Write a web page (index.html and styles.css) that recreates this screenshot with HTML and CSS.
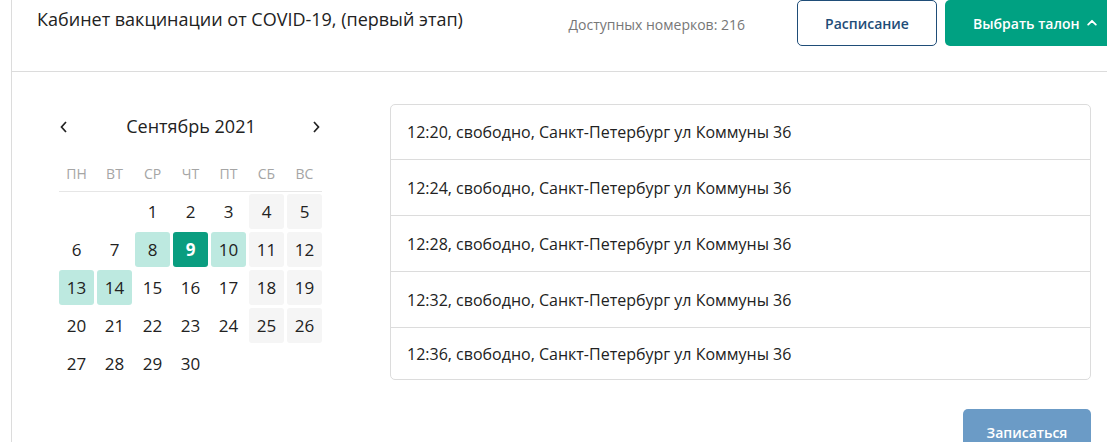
FILE: index.html
```html
<!DOCTYPE html>
<html lang="ru">
<head>
<meta charset="utf-8">
<title>Кабинет вакцинации</title>
<link rel="stylesheet" href="styles.css">
</head>
<body>
<div class="panel">
  <header class="head">
    <div class="title">Кабинет вакцинации от COVID-19, (первый этап)</div>
    <div class="actions">
      <span class="count">Доступных номерков: 216</span>
      <button class="btn btn-outline">Расписание</button>
      <button class="btn btn-green">Выбрать талон
        <svg class="caret" width="10" height="7" viewBox="0 0 10 7"><path d="M1.2 5.6 L5 1.8 L8.8 5.6" fill="none" stroke="#fff" stroke-width="1.8" stroke-linecap="round" stroke-linejoin="round"/></svg>
      </button>
    </div>
  </header>
  <main class="content">
    <section class="cal">
      <div class="cal-nav">
        <svg class="arrow" width="10" height="14" viewBox="0 0 10 14"><path d="M7 2 L2.5 7 L7 12" fill="none" stroke="#222" stroke-width="1.7"/></svg>
        <div class="month">Сентябрь 2021</div>
        <svg class="arrow" width="10" height="14" viewBox="0 0 10 14"><path d="M3 2 L7.5 7 L3 12" fill="none" stroke="#222" stroke-width="1.7"/></svg>
      </div>
      <div class="weekdays">
        <span>ПН</span><span>ВТ</span><span>СР</span><span>ЧТ</span><span>ПТ</span><span>СБ</span><span>ВС</span>
      </div>
      <div class="days">
        <span class="d"></span><span class="d"></span><span class="d">1</span><span class="d">2</span><span class="d">3</span><span class="d we">4</span><span class="d we">5</span>
        <span class="d">6</span><span class="d">7</span><span class="d av">8</span><span class="d sel">9</span><span class="d av">10</span><span class="d we">11</span><span class="d we">12</span>
        <span class="d av">13</span><span class="d av">14</span><span class="d">15</span><span class="d">16</span><span class="d">17</span><span class="d we">18</span><span class="d we">19</span>
        <span class="d">20</span><span class="d">21</span><span class="d">22</span><span class="d">23</span><span class="d">24</span><span class="d we">25</span><span class="d we">26</span>
        <span class="d">27</span><span class="d">28</span><span class="d">29</span><span class="d">30</span>
      </div>
    </section>
    <section class="right">
      <ul class="slots">
        <li>12:20, свободно, Санкт-Петербург ул Коммуны 36</li>
        <li>12:24, свободно, Санкт-Петербург ул Коммуны 36</li>
        <li>12:28, свободно, Санкт-Петербург ул Коммуны 36</li>
        <li>12:32, свободно, Санкт-Петербург ул Коммуны 36</li>
        <li>12:36, свободно, Санкт-Петербург ул Коммуны 36</li>
      </ul>
      <div class="submit-row">
        <button class="btn btn-submit">Записаться</button>
      </div>
    </section>
  </main>
</div>
</body>
</html>
```

FILE: styles.css
```css
html, body {
  margin: 0;
  padding: 0;
  overflow: hidden;
  background: #fff;
  font-family: "Open Sans", "Liberation Sans", sans-serif;
  color: #222;
}
.panel {
  margin-left: 11px;
  border-left: 1px solid #dcdcdc;
  min-height: 442px;
  overflow: hidden;
}
.head {
  display: flex;
  align-items: flex-start;
  height: 72px;
  box-sizing: border-box;
  border-bottom: 1px solid #dcdcdc;
  padding-left: 25px;
}
.title {
  flex: 1;
  font-size: 18px;
  line-height: 24px;
  margin-top: 7px;
  color: #222;
  white-space: nowrap;
}
.actions {
  display: flex;
  align-items: center;
  height: 46px;
  margin-right: -20px;
}
.count {
  font-size: 14px;
  color: #777;
  margin-right: 52px;
  margin-top: 2px;
}
.btn {
  font-family: "Open Sans", "Liberation Sans", sans-serif;
  font-size: 14px;
  font-weight: 600;
  border-radius: 5px;
  height: 46px;
  box-sizing: border-box;
  cursor: pointer;
  padding: 0;
  display: flex;
  align-items: center;
  justify-content: center;
}
.btn-outline {
  width: 140px;
  background: #fff;
  border: 1px solid #1f4d78;
  color: #1f4d78;
  margin-right: 8px;
}
.btn-green {
  width: 182px;
  background: #00a182;
  border: none;
  color: #fff;
  justify-content: flex-start;
  padding-left: 28px;
  gap: 7px;
}
.caret { margin-top: -1px; }
.content {
  display: flex;
  align-items: flex-start;
  padding: 32px 16px 0 47px;
}
.cal {
  width: 263px;
  flex: none;
}
.cal-nav {
  display: flex;
  align-items: center;
  justify-content: space-between;
  height: 46px;
  padding: 0 1px 0 0;
}
.arrow { display: block; }
.month {
  font-size: 18px;
  font-weight: 500;
  color: #222;
  padding-left: 2px;
  margin-top: -2px;
}
.weekdays {
  display: grid;
  grid-template-columns: repeat(7, 35px);
  column-gap: 3px;
  padding: 12px 0 5px;
  border-bottom: 1px solid #e6e6e6;
  font-size: 14px;
  line-height: 24px;
  color: #a5a5a5;
  text-align: center;
}
.days {
  display: grid;
  grid-template-columns: repeat(7, 35px);
  grid-auto-rows: 35px;
  gap: 3px;
  margin-top: 2px;
}
.d {
  display: flex;
  align-items: center;
  justify-content: center;
  font-size: 17px;
  font-weight: 500;
  color: #222;
  border-radius: 3px;
}
.we { background: #f5f5f5; }
.av { background: #bde9e0; }
.sel { background: #0a9d80; color: #fff; font-weight: 700; }
.right {
  flex: 1;
  margin-left: 68px;
}
.slots {
  list-style: none;
  margin: 0;
  padding: 0;
  border: 1px solid #dcdcdc;
  border-radius: 5px;
}
.slots li {
  height: 55px;
  display: flex;
  align-items: center;
  padding-left: 16px;
  font-size: 16px;
  color: #222;
  border-bottom: 1px solid #dcdcdc;
}
.slots li:first-child { height: 54px; }
.slots li:last-child { border-bottom: none; height: 51px; }
.submit-row {
  display: flex;
  justify-content: flex-end;
  margin-top: 29px;
}
.btn-submit {
  width: 128px;
  height: 46px;
  background: #6b9bc6;
  border: none;
  color: #fff;
}
```
